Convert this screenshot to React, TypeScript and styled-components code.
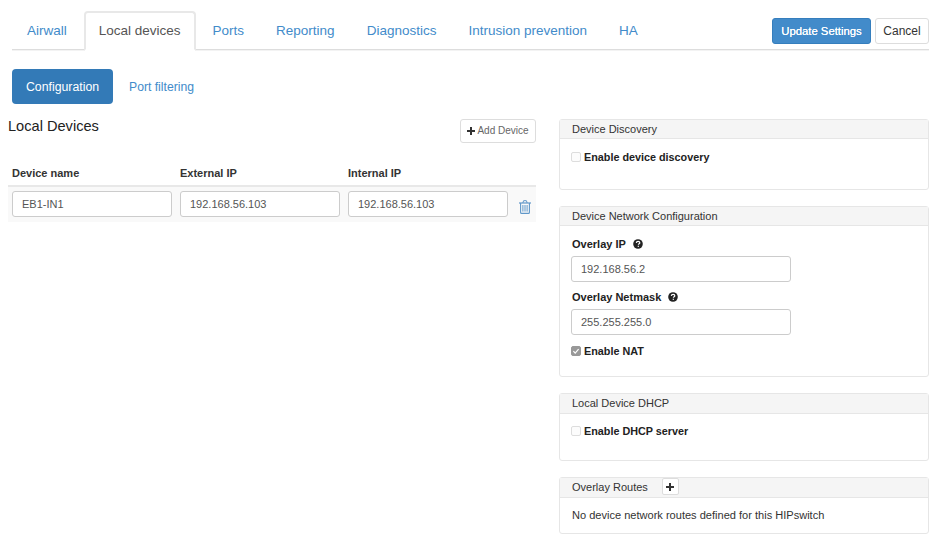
import React from "react";
import styled, { createGlobalStyle } from "styled-components";

const Global = createGlobalStyle`
  html, body { margin: 0; padding: 0; background: #fff; }
  body { font-family: "Liberation Sans", Arial, sans-serif; color: #333; font-size: 11px; }
  * { box-sizing: border-box; }
`;

const Page = styled.div`
  width: 936px;
  height: 538px;
  overflow: hidden;
  display: flex;
  flex-direction: column;
`;

const TopBar = styled.div`
  display: flex;
  margin: 11px 7px 0 12px;
  height: 39px;
  border-bottom: 1px solid #ddd;
  box-shadow: 0 1px 0 #f3f3f3;
`;

const Tabs = styled.div`
  display: flex;
  flex: 1;
`;

const Tab = styled.div`
  height: 38px;
  padding: 12px 15px 0;
  margin-right: 2px;
  font-size: 13.5px;
  line-height: 16px;
  color: #428bca;
  background: #fff;
`;

const ActiveTab = styled(Tab)`
  position: relative;
  height: 40px;
  margin: 0 2px -2px 0;
  padding: 10px 13px 0;
  color: #555;
  border: 2px solid #e8e8e8;
  border-bottom: 2px solid #fff;
  border-radius: 4px 4px 0 0;
`;

const TopActions = styled.div`
  display: flex;
  gap: 4px;
  padding-top: 7px;
`;

const Primary = styled.button`
  width: 99px;
  height: 26px;
  font: 400 11.3px/16px "Liberation Sans", Arial, sans-serif;
  color: #fff;
  text-shadow: 0 0 0.6px #fff;
  background: #428bca;
  border: 1px solid #357ebd;
  border-radius: 3px;
  padding: 0;
`;

const Cancel = styled.button`
  width: 54px;
  height: 26px;
  font: 12px/16px "Liberation Sans", Arial, sans-serif;
  color: #333;
  background: #fff;
  border: 1px solid #ddd;
  border-radius: 3px;
  padding: 0;
`;

const SubTabs = styled.div`
  display: flex;
  align-items: center;
  margin: 19px 0 0 12px;
  gap: 16px;
`;

const Pill = styled.div`
  width: 101px;
  height: 35px;
  border-radius: 4px;
  background: #337ab7;
  color: #fff;
  font-size: 12.3px;
  line-height: 36px;
  text-align: center;
`;

const PillLink = styled.div`
  color: #428bca;
  font-size: 12.2px;
`;

const Columns = styled.div`
  display: flex;
  margin: 15px 0 0 8px;
  gap: 23px;
`;

const Left = styled.div`
  width: 528px;
`;

const LeftHead = styled.div`
  display: flex;
  justify-content: space-between;
  height: 47px;
`;

const Title = styled.h2`
  margin: 0;
  font-size: 14.6px;
  font-weight: 400;
  line-height: 15px;
  color: #222;
`;

const AddButton = styled.button`
  width: 76px;
  height: 24px;
  padding: 0;
  background: #fff;
  border: 1px solid #ddd;
  border-radius: 3px;
  font: 10px/14px "Liberation Sans", Arial, sans-serif;
  color: #666;
  display: flex;
  align-items: center;
  justify-content: center;
  gap: 2px;
`;

const Grid = styled.div`
  display: grid;
  grid-template-columns: 168px 168px 168px 24px;
`;

const HeadCell = styled.div`
  height: 21px;
  padding-left: 4px;
  font-size: 11px;
  font-weight: 700;
  line-height: 14px;
  color: #333;
  border-bottom: 2px solid #e8e8e8;
`;

const RowCell = styled.div`
  height: 35px;
  padding: 4px 0 0 4px;
  background: #f9f9f9;
`;

const IconCell = styled(RowCell)`
  padding: 13px 0 0 7px;
`;

const Input = styled.input<{ $w?: number }>`
  display: block;
  width: ${(p) => p.$w ?? 160}px;
  height: 26px;
  padding: 0 9px;
  background: #fff;
  border: 1px solid #ccc;
  border-radius: 3px;
  font: 11px "Liberation Sans", Arial, sans-serif;
  color: #555;
`;

const WideInput = styled(Input)`
  margin-left: -1px;
`;

const Right = styled.div`
  width: 370px;
  display: flex;
  flex-direction: column;
  gap: 16px;
`;

const Panel = styled.section<{ $h: number }>`
  height: ${(p) => p.$h}px;
  border: 1px solid #e6e6e6;
  border-radius: 3px;
  background: #fff;
`;

const PanelHead = styled.div<{ $pad?: number }>`
  display: flex;
  align-items: center;
  height: ${(p) => (p.$pad ? 20 : 19)}px;
  padding: 0 0 ${(p) => p.$pad ?? 0}px 12px;
  background: #f5f5f5;
  border-bottom: 1px solid #e6e6e6;
  font-size: 11px;
  color: #333;
`;

const PanelBody = styled.div<{ $top?: number }>`
  padding: ${(p) => p.$top ?? 11}px 12px 0;
`;

const Check = styled.label`
  display: flex;
  align-items: center;
  gap: 3px;
  height: 14px;
  margin-left: -1px;
  font-size: 10.8px;
  font-weight: 700;
  color: #222;
`;

const NatCheck = styled(Check)`
  margin-top: 9px;
`;

const Box = styled.span<{ $on?: boolean }>`
  width: 10px;
  height: 10px;
  border-radius: 2px;
  border: 1px solid ${(p) => (p.$on ? "#999" : "#ddd")};
  background: ${(p) => (p.$on ? "#999" : "#fcfcfc")};
  display: flex;
  align-items: center;
  justify-content: center;
`;

const FieldLabel = styled.div`
  display: flex;
  align-items: center;
  gap: 7px;
  height: 14px;
  margin-bottom: 5px;
  font-size: 11px;
  font-weight: 700;
  color: #222;
`;

const Field = styled.div`
  & + & {
    margin-top: 8px;
  }
`;

const AddSmall = styled.button`
  width: 17px;
  height: 17px;
  margin-left: 14px;
  padding: 0;
  background: #fff;
  border: 1px solid #ddd;
  border-radius: 2px;
  display: flex;
  align-items: center;
  justify-content: center;
`;

const Note = styled.div`
  font-size: 11.05px;
  color: #333;
`;

const Plus = () => (
  <svg width="8" height="8" viewBox="0 0 8 8">
    <path d="M3 0h2v3h3v2H5v3H3V5H0V3h3z" fill="#333" />
  </svg>
);

const Help = () => (
  <svg width="10" height="10" viewBox="0 0 10 10">
    <circle cx="5" cy="5" r="4.8" fill="#222" />
    <path d="M3.3 3.9c.1-1 .8-1.6 1.8-1.6s1.7.6 1.7 1.4c0 1.2-1.4 1.1-1.4 2.1" fill="none" stroke="#fff" strokeWidth="1.2" />
    <rect x="4.7" y="6.7" width="1.2" height="1.2" fill="#fff" />
  </svg>
);

const Tick = () => (
  <svg width="8" height="8" viewBox="0 0 8 8">
    <path d="M1.4 4.2l1.8 1.9 3.4-4" fill="none" stroke="#fff" strokeWidth="1.2" />
  </svg>
);

const TrashIcon = () => (
  <svg width="12" height="14" viewBox="0 0 12 14" fill="none" stroke="#5f97c9">
    <path d="M0 3h12" strokeWidth="1.2" />
    <path d="M3.8 3 4.6.7h2.8L8.2 3" strokeWidth="1" />
    <path d="M1.6 3v9.4c0 .6.4 1 1 1h6.8c.6 0 1-.4 1-1V3" strokeWidth="1.1" />
    <path d="M3.9 5v6.6M6 5v6.6M8.1 5v6.6" strokeWidth="1" />
  </svg>
);

export default function App() {
  return (
    <Page>
      <Global />
      <TopBar>
        <Tabs>
          <Tab>Airwall</Tab>
          <ActiveTab>Local devices</ActiveTab>
          <Tab>Ports</Tab>
          <Tab>Reporting</Tab>
          <Tab>Diagnostics</Tab>
          <Tab>Intrusion prevention</Tab>
          <Tab>HA</Tab>
        </Tabs>
        <TopActions>
          <Primary>Update Settings</Primary>
          <Cancel>Cancel</Cancel>
        </TopActions>
      </TopBar>
      <SubTabs>
        <Pill>Configuration</Pill>
        <PillLink>Port filtering</PillLink>
      </SubTabs>
      <Columns>
        <Left>
          <LeftHead>
            <Title>Local Devices</Title>
            <AddButton><Plus />Add Device</AddButton>
          </LeftHead>
          <Grid>
            <HeadCell>Device name</HeadCell>
            <HeadCell>External IP</HeadCell>
            <HeadCell>Internal IP</HeadCell>
            <HeadCell />
            <RowCell><Input defaultValue="EB1-IN1" /></RowCell>
            <RowCell><Input defaultValue="192.168.56.103" /></RowCell>
            <RowCell><Input defaultValue="192.168.56.103" /></RowCell>
            <IconCell><TrashIcon /></IconCell>
          </Grid>
        </Left>
        <Right>
          <Panel $h={71}>
            <PanelHead>Device Discovery</PanelHead>
            <PanelBody>
              <Check><Box />Enable device discovery</Check>
            </PanelBody>
          </Panel>
          <Panel $h={171}>
            <PanelHead>Device Network Configuration</PanelHead>
            <PanelBody>
              <Field>
                <FieldLabel>Overlay IP <Help /></FieldLabel>
                <WideInput $w={220} defaultValue="192.168.56.2" />
              </Field>
              <Field>
                <FieldLabel>Overlay Netmask <Help /></FieldLabel>
                <WideInput $w={220} defaultValue="255.255.255.0" />
              </Field>
              <NatCheck><Box $on><Tick /></Box>Enable NAT</NatCheck>
            </PanelBody>
          </Panel>
          <Panel $h={68}>
            <PanelHead $pad={1}>Local Device DHCP</PanelHead>
            <PanelBody $top={10}>
              <Check><Box />Enable DHCP server</Check>
            </PanelBody>
          </Panel>
          <Panel $h={57}>
            <PanelHead $pad={2}>Overlay Routes<AddSmall><Plus /></AddSmall></PanelHead>
            <PanelBody><Note>No device network routes defined for this HIPswitch</Note></PanelBody>
          </Panel>
        </Right>
      </Columns>
    </Page>
  );
}
